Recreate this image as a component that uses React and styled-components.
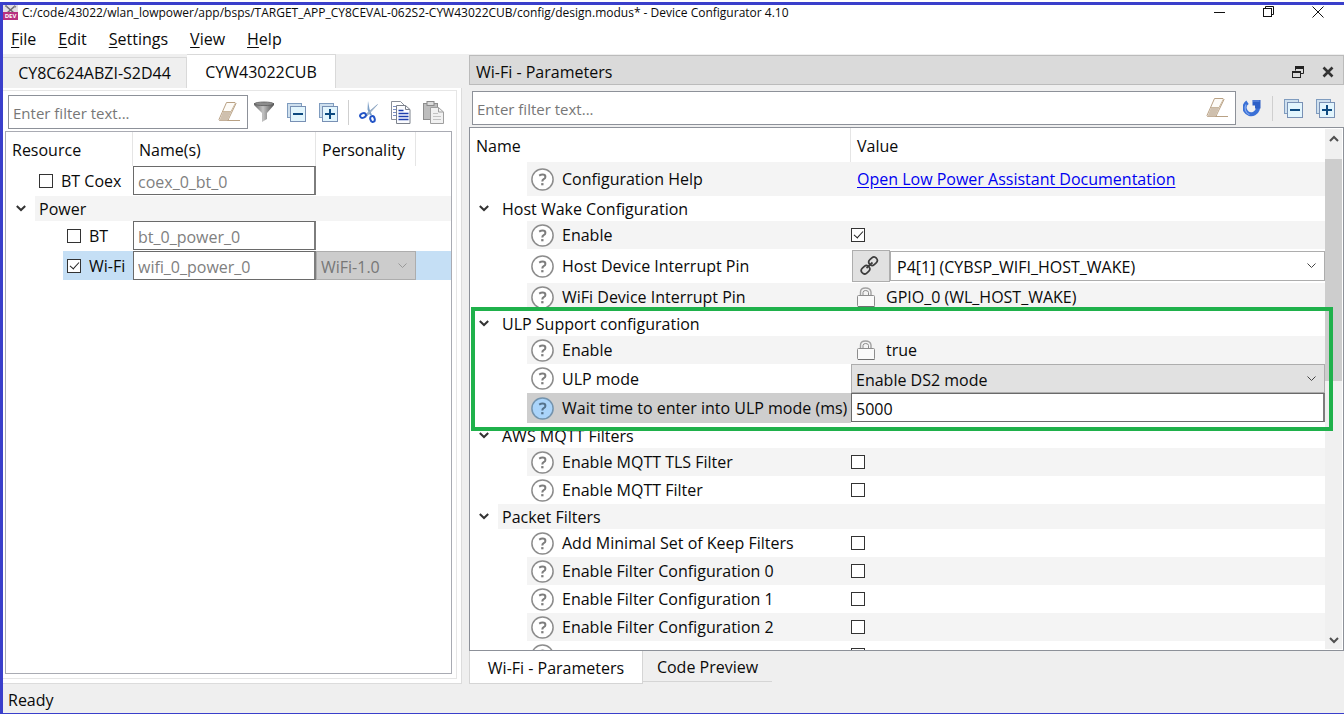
import React from "react";
import styled, { createGlobalStyle, css } from "styled-components";

const font = '"Open Sans", "Noto Sans", sans-serif';

const GlobalStyle = createGlobalStyle`
  *, *::before, *::after { box-sizing: border-box; }
  body { margin: 0; background: #fff; color: #0a0a0a; font: 16px/20px ${font}; }
  button, input, select { font: inherit; color: inherit; }
`;

/* ---------- window frame ---------- */

const Window = styled.div`
  height: 100vh;
  min-height: 480px;
  padding-top: 2px;
  display: flex;
  flex-direction: column;
`;

const Frame = styled.div`
  flex: 1;
  min-height: 0;
  display: flex;
  flex-direction: column;
  border: solid #3a3fcb;
  border-width: 3px 0 1px 3px;
  background: #efefef;
`;

const TitleBar = styled.header`
  height: 20px;
  padding-right: 19px;
  display: flex;
  align-items: flex-start;
  gap: 4px;
  background: #fff;
`;

const Title = styled.h1`
  flex: 1;
  margin: 0;
  font-size: 12px;
  line-height: 16px;
  font-weight: 400;
  white-space: nowrap;
`;

const WindowButtons = styled.div`
  display: flex;
  gap: 35px;
`;

const IconButton = styled.button`
  padding: 0;
  border: 0;
  background: none;
  display: flex;
  align-items: center;
  justify-content: center;
  flex: none;
  width: ${(p) => p.$w || 24}px;
  height: ${(p) => p.$h || 24}px;
`;

const MenuBar = styled.nav`
  height: 29px;
  padding: 0 8px 2px;
  display: flex;
  align-items: center;
  gap: 22px;
  background: #fff;
`;

const MenuItem = styled.button`
  padding: 0;
  border: 0;
  background: none;

  u { text-underline-offset: 2px; }
`;

const Main = styled.main`
  flex: 1;
  min-height: 0;
  display: grid;
  grid-template-columns: 459px minmax(0, 1fr);
  grid-template-rows: minmax(0, 1fr);
  gap: 7px;
`;

const StatusBar = styled.footer`
  height: 29px;
  padding: 2px 5px 0;
  display: flex;
  align-items: center;
`;

/* ---------- left panel ---------- */

const Column = styled.section`
  min-height: 0;
  display: flex;
  flex-direction: column;
`;

const TopTabs = styled.div`
  height: 34px;
  display: flex;
  align-items: flex-end;
`;

const TopTab = styled.button`
  height: ${(p) => (p.$active ? 34 : 31)}px;
  width: ${(p) => (p.$active ? 149 : 184)}px;
  padding: 0;
  border: 1px solid #d9d9d9;
  border-width: 1px 1px 0 0;
  background: ${(p) => (p.$active ? "#fff" : "#efefef")};
`;

const Pane = styled.div`
  flex: 1;
  min-height: 0;
  display: flex;
  padding: 2px 4px 4px 0;
  border: solid #dcdcdc;
  border-width: 0 1px 1px 0;
  background: #fff;
`;

const PaneInner = styled.div`
  flex: 1;
  min-width: 0;
  display: flex;
  flex-direction: column;
  gap: 2px;
  padding: 4px 4px 4px 2px;
  border: solid #e6e6e6;
  border-width: 1px 1px 1px 0;
`;

const Toolbar = styled.div`
  height: 34px;
  flex: none;
  padding: 0 7px 0 3px;
  display: flex;
  align-items: center;
  gap: 4px;
`;

const Tools = styled.div`
  flex: none;
  display: flex;
  align-items: center;
  gap: 8px;
`;

const FilterBox = styled.div`
  height: 34px;
  flex: 1;
  min-width: 0;
  display: flex;
  align-items: center;
  padding: 0 7px 0 4px;
  border: 1px solid #8d9199;
  background: #fff;
`;

const FilterInput = styled.input`
  flex: 1;
  min-width: 0;
  padding: 2px 0 0;
  border: 0;
  outline: 0;
  background: none;
  font-size: 15px;

  &::placeholder { color: #777; opacity: 1; }
`;

const Separator = styled.span`
  width: 1px;
  height: 25px;
  background: #cfcfcf;
`;

const TreeBox = styled.div`
  flex: 1;
  min-height: 0;
  overflow: hidden;
  border: 1px solid #a9abb3;
  background: #fff;
`;

const Grid = styled.table`
  width: 100%;
  table-layout: fixed;
  border-collapse: separate;
  border-spacing: 0;
`;

const Head = styled.th`
  height: 34px;
  width: ${(p) => (p.$w ? `${p.$w}px` : "auto")};
  padding: 2px 6px 0;
  text-align: left;
  font-weight: 400;
  border-right: ${(p) => (p.$last ? 0 : "1px solid #e5e5e5")};
`;

const tones = {
  plain: "#fff",
  stripe: "#f4f4f4",
  selected: "#c5dff5",
  active: "#cecece",
};

const Row = styled.tr`
  height: ${(p) => p.$h}px;
`;

const Cell = styled.td`
  height: ${(p) => p.$h}px;
  padding: 0;
  vertical-align: top;
  background: ${(p) => tones[p.$tone || "plain"]};
`;

const NameCell = styled.td`
  padding: 0;
  vertical-align: top;
  background: #fff;
`;

const NameLine = styled.div`
  height: ${(p) => p.$h}px;
  display: flex;
  align-items: center;
  white-space: nowrap;
`;

const Gutter = styled.span`
  flex: none;
  width: ${(p) => p.$w}px;
  display: flex;
  justify-content: center;
`;

const NameFill = styled.div`
  flex: 1;
  height: 100%;
  min-width: 0;
  display: flex;
  align-items: center;
  gap: 8px;
  padding-left: 4px;
  background: ${(p) => tones[p.$tone || "plain"]};
`;

const CheckLabel = styled.label`
  display: flex;
  align-items: center;
  gap: 8px;
`;

const Check = styled.input.attrs({ type: "checkbox" })`
  appearance: none;
  flex: none;
  position: relative;
  display: block;
  width: 14px;
  height: 14px;
  margin: 0;
  border: 1px solid #333;
  background: #fff;

  &:checked::after {
    content: "";
    position: absolute;
    left: 4px;
    top: 0;
    width: 5px;
    height: 9px;
    border: solid #222;
    border-width: 0 1px 1px 0;
    transform: rotate(42deg);
  }
`;

const TextField = styled.input`
  display: block;
  width: 100%;
  height: 29px;
  padding: 3px 4px 0;
  border: 1px solid #6a6a6a;
  border-right: 2px solid #7d7d7d;
  border-radius: 0;
  outline: 0;
  background: #fff;
  color: ${(p) => (p.$dim ? "#808080" : "#0a0a0a")};
`;

const SelectWrap = styled.div`
  position: relative;
  flex: 1;
  min-width: 0;
  height: ${(p) => p.$h || 29}px;

  svg {
    position: absolute;
    right: 9px;
    top: 50%;
    margin-top: -3px;
    pointer-events: none;
  }
`;

const Select = styled.select`
  appearance: none;
  width: 100%;
  height: 100%;
  padding: 2px 24px 0 ${(p) => p.$pad || 4}px;
  border: 1px solid #adadad;
  border-radius: 0;
  outline: 0;
  background: ${(p) => p.$bg || "#fff"};
  opacity: 1;
  color: ${(p) => (p.$dim ? "#777" : "#0a0a0a")};
`;

/* ---------- right panel ---------- */

const DockTitle = styled.div`
  height: 30px;
  margin-top: 1px;
  flex: none;
  display: flex;
  align-items: center;
  gap: 6px;
  padding: 3px 3px 0 6px;
  border: 1px solid #bbb;
  background: #dadada;

  h2 {
    flex: 1;
    margin: 0;
    font-size: 16px;
    font-weight: 400;
  }
`;

const DockToolbar = styled.div`
  padding: 6px 0 2px;
`;

const ParamBox = styled.div`
  flex: 1;
  min-height: 0;
  display: flex;
  overflow: hidden;
  position: relative;
  border: 1px solid #8d9199;
  background: #fff;
`;

const ParamTable = styled.div`
  flex: 1;
  min-width: 0;
`;

const Group = styled.tbody`
  ${(p) =>
    p.$outlined &&
    css`
      position: relative;

      &::after {
        content: "";
        position: absolute;
        z-index: 2;
        top: -4px;
        bottom: -8px;
        left: 1px;
        right: -8px;
        border: 4px solid #1fb14b;
        pointer-events: none;
      }
    `}
`;

const HelpButton = styled.button`
  flex: none;
  width: 23px;
  height: 23px;
  padding: 0;
  border: 0;
  background: none;

  svg { display: block; }
`;

const Value = styled.div`
  height: ${(p) => p.$h}px;
  display: flex;
  align-items: center;
  gap: ${(p) => p.$gap || 0}px;
  padding-left: ${(p) => p.$pad || 0}px;
`;

const DocLink = styled.a`
  color: #0000f0;
  text-decoration: underline;
  text-underline-offset: 2px;
`;

const ChainButton = styled.button`
  flex: none;
  width: 38px;
  height: 32px;
  padding: 0 3px 2px 0;
  border: 1px solid #adadad;
  background: #e1e1e1;
  display: flex;
  align-items: center;
  justify-content: center;
`;

const Scrollbar = styled.div`
  flex: none;
  width: 17px;
  margin: 1px 1px 1px 0;
  display: flex;
  flex-direction: column;
  background: #f0f0f0;
`;

const Thumb = styled.div`
  height: 222px;
  margin-bottom: auto;
  background: #cdcdcd;
`;

const BottomTabs = styled.div`
  display: flex;
  align-items: flex-start;
`;

const BottomTab = styled.button`
  height: ${(p) => (p.$active ? 33 : 31)}px;
  width: ${(p) => (p.$active ? 174 : 129)}px;
  padding: 2px 0 0;
  border: solid #d5d5d5;
  border-width: ${(p) => (p.$active ? "0 1px 1px" : "0 0 1px")};
  background: ${(p) => (p.$active ? "#fff" : "none")};
`;

/* ---------- icons ---------- */

const AppLogo = () => (
  <svg width="15" height="15" viewBox="0 0 15 15" aria-hidden="true">
    <rect width="15" height="8" fill="#e4e0e4" />
    <path d="M3 1l8 7M12 1L4 8" stroke="#6d6a70" strokeWidth="1.6" />
    <path d="M2 1l2 0M11 1l2 1" stroke="#8b868c" strokeWidth="1.5" />
    <rect y="7" width="15" height="8" fill="#b8317f" />
    <text x="7.5" y="13.4" textAnchor="middle" fontSize="6" fontWeight="700" fill="#fff">DEV</text>
  </svg>
);

const Minimize = () => (
  <svg width="12" height="12" viewBox="0 0 12 12"><path d="M0 6.5h11" stroke="#111" /></svg>
);
const Restore = () => (
  <svg width="12" height="12" viewBox="0 0 12 12" fill="none" stroke="#111">
    <rect x=".5" y="2.5" width="8" height="8" />
    <path d="M2.5 2.5v-2h8v8h-2" />
  </svg>
);
const Close = () => (
  <svg width="12" height="12" viewBox="0 0 12 12"><path d="M.5.5l11 11M11.5.5l-11 11" stroke="#111" /></svg>
);

const Float = () => (
  <svg width="12" height="12" viewBox="0 0 12 12" fill="none" stroke="#222">
    <path d="M3.5 4.5V1M11.5 1v6.5H8.5" />
    <path d="M3 1.5h9" strokeWidth="3" />
    <rect x=".5" y="5.5" width="8" height="6" />
    <path d="M0 6h9" strokeWidth="2" />
  </svg>
);
const DockClose = () => (
  <svg width="12" height="12" viewBox="0 0 12 12">
    <path d="M1.5 1.5l9 9M10.5 1.5l-9 9" stroke="#333" strokeWidth="2.6" />
  </svg>
);

const Help = ({ on, label }) => (
  <HelpButton aria-label={`Help: ${label}`}>
    <svg width="23" height="23" viewBox="0 0 23 23" fill="none" stroke={on ? "#54728c" : "#7d7d7d"}>
      <circle cx="11.5" cy="11.5" r="10.6" fill={on ? "#aad4fa" : "#fff"} stroke={on ? "#7393ad" : "#8c8c8c"} strokeWidth="1.5" />
      <path d="M8.2 7.6Q9.8 6.6 11.6 6.6 14.4 6.6 14.4 8.9 14.4 10.3 12.7 11.2 11.3 12 11.3 13.6" strokeWidth="2" />
      <path d="M10.2 16.2h2.300" strokeWidth="2.2" />
    </svg>
  </HelpButton>
);

const Eraser = () => (
  <svg width="22" height="22" viewBox="0 0 22 22">
    <path d="M8.500 1.500h8.500l1 1-7 14.500-1 2.500H1.500l-.5-1z" fill="#fdfbf7" stroke="#b9a184" />
    <path d="M5 10.500h8.500l-4 9h-8z" fill="#cfc0ae" />
    <path d="M5 10.500h8l4.500-8.500" fill="none" stroke="#c9b79e" />
    <path d="M9.500 19.500H22" stroke="#b9a184" />
  </svg>
);

const Funnel = () => (
  <svg width="20" height="22" viewBox="0 0 20 22">
    <defs>
      <linearGradient id="funnel" x1="0" x2="1">
        <stop offset="0" stopColor="#666" />
        <stop offset=".45" stopColor="#c4c4c4" />
        <stop offset="1" stopColor="#4d4d4d" />
      </linearGradient>
    </defs>
    <path d="M0 2h20v2l-7 8v6L8 21v-9L0 4z" fill="url(#funnel)" />
    <ellipse cx="10" cy="2.8" rx="9.5" ry="1.8" fill="#8d8d8d" stroke="#5c5c5c" strokeWidth=".8" />
  </svg>
);

const Stack = ({ plus }) => (
  <svg width="19" height="19" viewBox="0 0 19 19">
    <rect x=".5" y=".5" width="14" height="14" fill="#cfe0ee" stroke="#7f9cbf" />
    <rect x="3.5" y="3.5" width="15" height="15" fill="#e2f5fd" stroke="#7890b4" />
    <path d="M6 11h10" stroke="#0d4a80" strokeWidth="2" />
    {plus && <path d="M11 6v10" stroke="#0d4a80" strokeWidth="2" />}
  </svg>
);

const Scissors = () => (
  <svg width="20" height="22" viewBox="0 0 20 22" fill="none">
    <path d="M9 0l1.5 8 2.500 6-2 .5-2.500-6z" fill="#7ea1c8" />
    <path d="M18.500 3.500L8 15l-1.500-1.500z" fill="#9fb4cc" stroke="#7f9bbb" strokeWidth=".6" />
    <ellipse cx="4" cy="14.5" rx="3" ry="2.2" transform="rotate(-20 4 14.5)" stroke="#2354c6" strokeWidth="2" />
    <ellipse cx="13.5" cy="18" rx="2.2" ry="3" transform="rotate(-15 13.5 18)" stroke="#2354c6" strokeWidth="2" />
  </svg>
);

const Copy = () => (
  <svg width="20" height="23" viewBox="0 0 20 23">
    <path d="M.5.5h9l4 4v14H.5z" fill="#fff" stroke="#8a8f99" />
    <path d="M2 5.500h3M2 8.500h3M2 11.500h3M2 14.500h3" stroke="#7b8fc4" />
    <path d="M5.500 4.500h9l4.500 4v14H5.500z" fill="#fbfcff" stroke="#7d828c" />
    <path d="M14.500 4.500v4H19" fill="none" stroke="#7d828c" />
    <path d="M7.500 9.500h5M7.500 12.500h10M7.500 15.500h10M7.500 18.500h10" stroke="#1d3fae" strokeWidth="1.4" />
  </svg>
);

const Paste = () => (
  <svg width="21" height="23" viewBox="0 0 21 23">
    <rect x=".5" y="2.5" width="14" height="16" fill="#bdbdbd" stroke="#8e8e8e" />
    <rect x="4" y=".5" width="7" height="4" fill="#dcdcdc" stroke="#8a8a8a" />
    <path d="M7.500 6.500h8l5 4.500v11.500h-13z" fill="#f1f1f1" stroke="#9f9f9f" />
    <path d="M15.500 6.500V11h5" fill="none" stroke="#9f9f9f" />
    <path d="M10 12.500h5M10 15.500h8M10 18.500h8" stroke="#c3c3c3" />
  </svg>
);

const Refresh = () => (
  <svg width="18" height="18" viewBox="0 0 18 18">
    <path d="M4.5 3.2A6.600 6.600 0 1 0 14.300 6" fill="none" stroke="#3a70d6" strokeWidth="4.2" />
    <path d="M3 5.500A7 7 0 0 0 6.500 15.600" fill="none" stroke="#7fa6ee" strokeWidth="1.3" />
    <path d="M9.500 1H17.500V9.500H12V6.500H9.500z" fill="#2c5fc6" />
    <path d="M10 2h6.500" stroke="#6f97e6" />
  </svg>
);

const Padlock = () => (
  <svg width="20" height="20" viewBox="0 0 20 20" fill="none">
    <path d="M4.500 9V5q0-4 5-4t5.500 4v4" stroke="#a2a2a2" strokeWidth="1.4" />
    <path d="M7 9V5.500Q7 3.500 9.700 3.500t2.800 2V9" stroke="#8b8b8b" />
    <rect x="1.5" y="8.5" width="17" height="11" rx="1" fill="#fafafa" stroke="#8d8d8d" />
    <path d="M2 19.500h16.500" stroke="#6f6f6f" />
  </svg>
);

const Chain = () => (
  <svg width="19" height="19" viewBox="0 0 19 19" fill="none" stroke="#3c3c3c" strokeWidth="1.7">
    <rect x="8.5" y="2" width="9" height="6.5" rx="3.2" transform="rotate(-42 13 5.2)" />
    <rect x="1" y="10.5" width="9" height="6.5" rx="3.2" transform="rotate(-42 5.5 13.7)" />
    <path d="M6.500 12l6-5.500" />
  </svg>
);

const Caret = () => (
  <svg width="10" height="7" viewBox="0 0 10 7" fill="none" stroke="#333" strokeWidth="2">
    <path d="M.8 1l4.200 4 4.200-4" />
  </svg>
);

const Chevron = ({ color = "#444" }) => (
  <svg width="9" height="6" viewBox="0 0 9 6" fill="none" stroke={color}>
    <path d="M.5.5l4 4 4-4" />
  </svg>
);

const ScrollArrow = ({ down }) => (
  <svg width="17" height="30" viewBox="0 0 17 30" fill="none" stroke="#505050" strokeWidth="2">
    <path d={down ? "M5 19l4 4 4-4" : "M5 12l4-4 4 4"} />
  </svg>
);

/* ---------- pieces ---------- */

const Filter = ({ label }) => (
  <FilterBox>
    <FilterInput placeholder="Enter filter text..." aria-label={label} />
    <IconButton $w={22} aria-label="Clear filter"><Eraser /></IconButton>
  </FilterBox>
);

const ParamRow = ({ h = 28, tone, label, help = label, on, valueTone, children }) => (
  <Row $h={h}>
    <NameCell>
      <NameLine $h={h}>
        <Gutter $w={57} />
        <NameFill $tone={tone}>
          <Help on={on} label={help} />
          {label && <span>{label}</span>}
        </NameFill>
      </NameLine>
    </NameCell>
    <Cell $h={h} $tone={valueTone || tone}>{children}</Cell>
  </Row>
);

const GroupRow = ({ tone, label }) => (
  <Row $h={25}>
    <NameCell>
      <NameLine $h={25}>
        <Gutter $w={28}><Caret /></Gutter>
        <NameFill $tone={tone}>{label}</NameFill>
      </NameLine>
    </NameCell>
    <Cell $h={25} $tone={tone} />
  </Row>
);

const CheckRow = ({ label, help = label, tone, checked }) => (
  <ParamRow label={label} help={help} tone={tone}>
    <Value $h={28}><Check defaultChecked={checked} aria-label={help} /></Value>
  </ParamRow>
);

const Menus = ["File", "Edit", "Settings", "View", "Help"];

const ResourceTree = () => (
  <TreeBox>
    <Grid>
      <thead>
        <tr>
          <Head $w={127}>Resource</Head>
          <Head $w={183}>Name(s)</Head>
          <Head $w={100}>Personality</Head>
          <Head $last aria-label="Details" />
        </tr>
      </thead>
      <tbody>
        <Row $h={30}>
          <NameCell>
            <NameLine $h={30}>
              <Gutter $w={29} />
              <NameFill><CheckLabel><Check />BT Coex</CheckLabel></NameFill>
            </NameLine>
          </NameCell>
          <Cell $h={30}><TextField $dim defaultValue="coex_0_bt_0" aria-label="BT Coex name" /></Cell>
          <Cell /><Cell />
        </Row>
        <Row $h={25}>
          <NameCell>
            <NameLine $h={25}>
              <Gutter $w={29}><Caret /></Gutter>
              <NameFill $tone="stripe">Power</NameFill>
            </NameLine>
          </NameCell>
          <Cell $tone="stripe" /><Cell $tone="stripe" /><Cell $tone="stripe" />
        </Row>
        <Row $h={30}>
          <NameCell>
            <NameLine $h={30}>
              <Gutter $w={57} />
              <NameFill><CheckLabel><Check />BT</CheckLabel></NameFill>
            </NameLine>
          </NameCell>
          <Cell $h={30}><TextField $dim defaultValue="bt_0_power_0" aria-label="BT name" /></Cell>
          <Cell /><Cell />
        </Row>
        <Row $h={29}>
          <NameCell>
            <NameLine $h={29}>
              <Gutter $w={57} />
              <NameFill $tone="selected"><CheckLabel><Check defaultChecked />Wi-Fi</CheckLabel></NameFill>
            </NameLine>
          </NameCell>
          <Cell $tone="selected"><TextField $dim defaultValue="wifi_0_power_0" aria-label="Wi-Fi name" /></Cell>
          <Cell $tone="selected">
            <SelectWrap>
              <Select $bg="#ccc" $dim disabled aria-label="Wi-Fi personality"><option>WiFi-1.0</option></Select>
              <Chevron color="#999" />
            </SelectWrap>
          </Cell>
          <Cell $tone="selected" />
        </Row>
      </tbody>
    </Grid>
  </TreeBox>
);

const Parameters = () => (
  <ParamBox>
    <ParamTable>
      <Grid>
        <thead>
          <tr>
            <Head $w={381}>Name</Head>
            <Head $last>Value</Head>
          </tr>
        </thead>
        <tbody>
          <ParamRow h={34} tone="stripe" label="Configuration Help">
            <Value $h={34} $pad={6}>
              <DocLink href="#low-power">Open Low Power Assistant Documentation</DocLink>
            </Value>
          </ParamRow>
        </tbody>
        <Group>
          <GroupRow label="Host Wake Configuration" />
          <CheckRow label="Enable" tone="stripe" checked />
          <ParamRow h={34} label="Host Device Interrupt Pin">
            <Value $h={34} $pad={1}>
              <ChainButton aria-label="Go to linked resource"><Chain /></ChainButton>
              <SelectWrap $h={30}>
                <Select $pad={6} aria-label="Host Device Interrupt Pin">
                  <option>P4[1] (CYBSP_WIFI_HOST_WAKE)</option>
                </Select>
                <Chevron />
              </SelectWrap>
            </Value>
          </ParamRow>
          <ParamRow tone="stripe" label="WiFi Device Interrupt Pin">
            <Value $h={28} $pad={5} $gap={10}><Padlock /><span>GPIO_0 (WL_HOST_WAKE)</span></Value>
          </ParamRow>
        </Group>
        <Group $outlined>
          <GroupRow label="ULP Support configuration" />
          <ParamRow tone="stripe" label="Enable">
            <Value $h={28} $pad={5} $gap={10}><Padlock /><span>true</span></Value>
          </ParamRow>
          <ParamRow h={29} label="ULP mode">
            <SelectWrap>
              <Select $bg="#e1e1e1" aria-label="ULP mode"><option>Enable DS2 mode</option></Select>
              <Chevron />
            </SelectWrap>
          </ParamRow>
          <ParamRow h={30} tone="active" valueTone="plain" on label="Wait time to enter into ULP mode (ms)">
            <TextField defaultValue="5000" aria-label="Wait time to enter into ULP mode (ms)" />
          </ParamRow>
        </Group>
        <Group>
          <GroupRow label="AWS MQTT Filters" />
          <CheckRow label="Enable MQTT TLS Filter" tone="stripe" />
          <CheckRow label="Enable MQTT Filter" />
        </Group>
        <Group>
          <GroupRow label="Packet Filters" tone="stripe" />
          <CheckRow label="Add Minimal Set of Keep Filters" />
          <CheckRow label="Enable Filter Configuration 0" tone="stripe" />
          <CheckRow label="Enable Filter Configuration 1" />
          <CheckRow label="Enable Filter Configuration 2" tone="stripe" />
          <CheckRow help="Next filter" />
        </Group>
      </Grid>
    </ParamTable>
    <Scrollbar aria-hidden="true">
      <ScrollArrow />
      <Thumb />
      <ScrollArrow down />
    </Scrollbar>
  </ParamBox>
);

export default function App() {
  return (
    <Window>
      <GlobalStyle />
      <Frame>
        <TitleBar>
          <AppLogo />
          <Title>
            C:/code/43022/wlan_lowpower/app/bsps/TARGET_APP_CY8CEVAL-062S2-CYW43022CUB/config/design.modus* - Device
            Configurator 4.10
          </Title>
          <WindowButtons>
            <IconButton $w={14} $h={14} aria-label="Minimize"><Minimize /></IconButton>
            <IconButton $w={14} $h={14} aria-label="Restore"><Restore /></IconButton>
            <IconButton $w={14} $h={14} aria-label="Close"><Close /></IconButton>
          </WindowButtons>
        </TitleBar>
        <MenuBar>
          {Menus.map((m) => (
            <MenuItem key={m}><u>{m[0]}</u>{m.slice(1)}</MenuItem>
          ))}
        </MenuBar>
        <Main>
          <Column>
            <TopTabs>
              <TopTab>CY8C624ABZI-S2D44</TopTab>
              <TopTab $active>CYW43022CUB</TopTab>
            </TopTabs>
            <Pane>
              <PaneInner>
                <Toolbar>
                  <Filter label="Filter resources" />
                  <Tools>
                    <IconButton aria-label="Filter options"><Funnel /></IconButton>
                    <IconButton aria-label="Collapse all"><Stack /></IconButton>
                    <IconButton aria-label="Expand all"><Stack plus /></IconButton>
                    <Separator />
                    <IconButton aria-label="Cut"><Scissors /></IconButton>
                    <IconButton aria-label="Copy"><Copy /></IconButton>
                    <IconButton aria-label="Paste"><Paste /></IconButton>
                  </Tools>
                </Toolbar>
                <ResourceTree />
              </PaneInner>
            </Pane>
          </Column>
          <Column>
            <DockTitle>
              <h2>Wi-Fi - Parameters</h2>
              <IconButton aria-label="Float panel"><Float /></IconButton>
              <IconButton aria-label="Close panel"><DockClose /></IconButton>
            </DockTitle>
            <DockToolbar>
              <Toolbar>
                <Filter label="Filter parameters" />
                <Tools>
                  <IconButton aria-label="Reset"><Refresh /></IconButton>
                  <Separator />
                  <IconButton aria-label="Collapse all parameters"><Stack /></IconButton>
                  <IconButton aria-label="Expand all parameters"><Stack plus /></IconButton>
                </Tools>
              </Toolbar>
            </DockToolbar>
            <Parameters />
            <BottomTabs>
              <BottomTab $active>Wi-Fi - Parameters</BottomTab>
              <BottomTab>Code Preview</BottomTab>
            </BottomTabs>
          </Column>
        </Main>
        <StatusBar>Ready</StatusBar>
      </Frame>
    </Window>
  );
}
